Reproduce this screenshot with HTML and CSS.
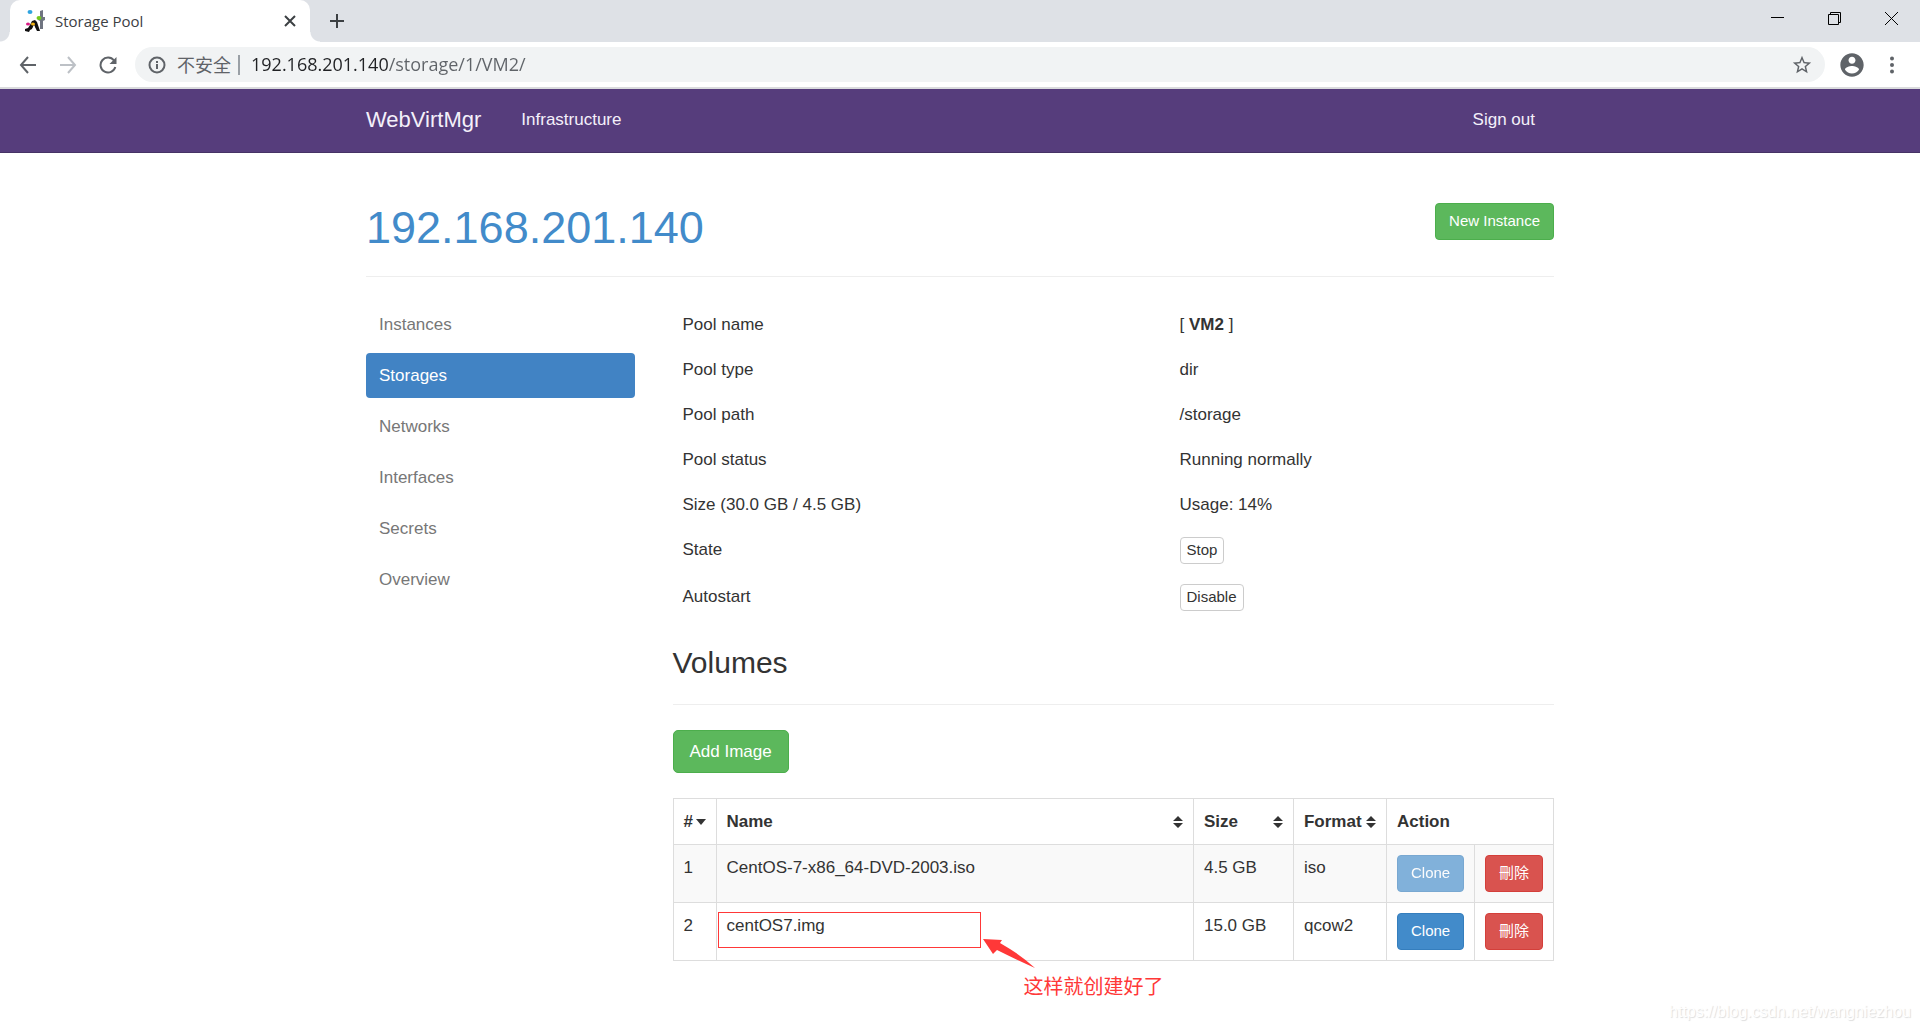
FILE: index.html
```html
<!DOCTYPE html>
<html lang="en">
<head>
<meta charset="utf-8">
<meta name="viewport" content="width=device-width, initial-scale=1">
<title>Storage Pool</title>
<link rel="stylesheet" href="styles.css">
</head>
<body>
<header class="browser">
  <div class="tabstrip">
    <div class="tab">
      <svg class="favicon" viewBox="0 0 20 22" aria-hidden="true">
        <path d="M15 1l3-1v7h2v3l-2 1v8h-3v-8l-2-1V8l2 1z" fill="#6f7480"/>
        <path d="M7 11l3-1 2 2 3 9h-3l-3-6-2 4-2 1-1 2-4-1v-2l3-1 2-3z" fill="#111"/>
        <path d="M9 15l1 4-3 1z" fill="#fff"/>
        <ellipse cx="5" cy="2" rx="2.500" ry="2" fill="#2fa4e0"/>
        <ellipse cx="14" cy="8" rx="2.500" ry="2" fill="#76c81e"/>
        <ellipse cx="3" cy="14" rx="2" ry="1.500" fill="#d81b84"/>
        <ellipse cx="8" cy="14" rx="2" ry="1.500" fill="#f2b414"/>
      </svg>
      <span class="tab-title">Storage Pool</span>
      <button class="tab-close" aria-label="Close tab"><svg width="12" height="12" viewBox="0 0 12 12"><path d="M1 1l10 10M11 1L1 11" stroke="#3c4043" stroke-width="2"/></svg></button>
    </div>
    <button class="tab-new" aria-label="New tab"><svg width="16" height="16" viewBox="0 0 16 16"><path d="M8 1v14M1 8h14" stroke="#3c4043" stroke-width="2"/></svg></button>
    <div class="window-controls">
      <button aria-label="Minimize"><svg width="13" height="13" viewBox="0 0 13 13"><path d="M0 5.500h13" stroke="#000"/></svg></button>
      <button aria-label="Restore"><svg width="13" height="13" viewBox="0 0 13 13"><path d="M.5 2.500h10v10H.5zM2.500 2.500v-2h10v10h-2" fill="none" stroke="#000"/></svg></button>
      <button aria-label="Close"><svg width="13" height="13" viewBox="0 0 13 13"><path d="M0 0l13 13M13 0L0 13" stroke="#000"/></svg></button>
    </div>
  </div>
  <div class="toolbar">
    <button class="tool" aria-label="Back"><svg width="18" height="18" viewBox="0 0 18 18"><path d="M17 9H2M9 1L2 9l7 8" fill="none" stroke="#5f6368" stroke-width="2"/></svg></button>
    <button class="tool" aria-label="Forward"><svg width="18" height="18" viewBox="0 0 18 18"><path d="M1 9h15M9 1l7 8-7 8" fill="none" stroke="#bdc1c6" stroke-width="2"/></svg></button>
    <button class="tool" aria-label="Reload"><svg width="18" height="18" viewBox="0 0 18 18"><path d="M15 4.500A7.500 7.500 0 1 0 16.300 11" fill="none" stroke="#5f6368" stroke-width="2"/><path d="M17.500 1v7h-7z" fill="#5f6368"/></svg></button>
    <div class="omnibox">
      <svg width="18" height="18" viewBox="0 0 18 18" aria-hidden="true"><circle cx="9" cy="9" r="7.500" fill="none" stroke="#5f6368" stroke-width="2"/><path d="M9 8v5M9 5v2" stroke="#5f6368" stroke-width="2"/></svg>
      <label class="security" for="address">不安全</label>
      <input id="address" class="address" type="text" value="192.168.201.140/storage/1/VM2/">
      <button class="star" aria-label="Bookmark"><svg width="22" height="22" viewBox="0 0 24 24"><path fill="#5f6368" d="M22 9.240l-7.190-.62L12 2 9.190 8.630 2 9.240l5.460 4.730L5.820 21 12 17.270 18.180 21l-1.630-7.030L22 9.240zM12 15.400l-3.760 2.270 1-4.280-3.320-2.880 4.380-.38L12 6.100l1.710 4.040 4.380.38-3.320 2.880 1 4.280L12 15.400z"/></svg></button>
    </div>
    <button class="tool" aria-label="Profile"><svg width="28" height="28" viewBox="0 0 24 24"><path fill="#5f6368" d="M12 2C6.480 2 2 6.480 2 12s4.480 10 10 10 10-4.480 10-10S17.520 2 12 2zm0 3c1.660 0 3 1.340 3 3s-1.340 3-3 3-3-1.340-3-3 1.340-3 3-3zm0 14.200c-2.500 0-4.710-1.280-6-3.220.03-1.990 4-3.080 6-3.080 1.990 0 5.970 1.090 6 3.080-1.290 1.940-3.500 3.220-6 3.220z"/></svg></button>
    <button class="tool" aria-label="Menu"><svg width="6" height="18" viewBox="0 0 6 18"><g fill="#5f6368"><circle cx="3" cy="2.500" r="2"/><circle cx="3" cy="9" r="2"/><circle cx="3" cy="15.500" r="2"/></g></svg></button>
  </div>
</header>

<nav class="navbar">
  <div class="container navbar-inner">
    <a class="brand" href="#">WebVirtMgr</a>
    <a class="navbar-link" href="#">Infrastructure</a>
    <a class="navbar-link navbar-end" href="#">Sign out</a>
  </div>
</nav>

<main class="container">
  <div class="page-header">
    <h1><a href="#">192.168.201.140</a></h1>
    <button class="btn btn-sm btn-success">New Instance</button>
  </div>
  <div class="layout">
    <nav class="sidebar" aria-label="Host">
      <a href="#">Instances</a>
      <a class="active" href="#">Storages</a>
      <a href="#">Networks</a>
      <a href="#">Interfaces</a>
      <a href="#">Secrets</a>
      <a href="#">Overview</a>
    </nav>
    <div class="content">
      <table class="info">
        <tbody>
          <tr><td>Pool name</td><td>[ <strong>VM2</strong> ]</td></tr>
          <tr><td>Pool type</td><td>dir</td></tr>
          <tr><td>Pool path</td><td>/storage</td></tr>
          <tr><td>Pool status</td><td>Running normally</td></tr>
          <tr><td>Size (30.0 GB / 4.5 GB)</td><td>Usage: 14%</td></tr>
          <tr><td>State</td><td><button class="btn btn-xs btn-default">Stop</button></td></tr>
          <tr><td>Autostart</td><td><button class="btn btn-xs btn-default">Disable</button></td></tr>
        </tbody>
      </table>
      <h2>Volumes</h2>
      <button class="btn btn-success">Add Image</button>
      <div class="volumes-wrap">
        <table class="volumes">
          <colgroup><col class="c-num"><col><col class="c-size"><col class="c-format"><col class="c-clone"><col class="c-delete"></colgroup>
          <thead>
            <tr>
              <th><button class="sort">#<svg width="10" height="6" viewBox="0 0 10 6"><path d="M0 0h10L5 6z" fill="#333"/></svg></button></th>
              <th><button class="sort">Name<svg width="10" height="12" viewBox="0 0 10 12"><path d="M0 5h10L5 0zM0 7h10l-5 5z" fill="#333"/></svg></button></th>
              <th><button class="sort">Size<svg width="10" height="12" viewBox="0 0 10 12"><path d="M0 5h10L5 0zM0 7h10l-5 5z" fill="#333"/></svg></button></th>
              <th><button class="sort">Format<svg width="10" height="12" viewBox="0 0 10 12"><path d="M0 5h10L5 0zM0 7h10l-5 5z" fill="#333"/></svg></button></th>
              <th colspan="2">Action</th>
            </tr>
          </thead>
          <tbody>
            <tr>
              <td>1</td><td>CentOS-7-x86_64-DVD-2003.iso</td><td>4.5 GB</td><td>iso</td>
              <td><button class="btn btn-sm btn-primary" disabled>Clone</button></td>
              <td><button class="btn btn-sm btn-danger">刪除</button></td>
            </tr>
            <tr>
              <td>2</td><td>centOS7.img</td><td>15.0 GB</td><td>qcow2</td>
              <td><button class="btn btn-sm btn-primary">Clone</button></td>
              <td><button class="btn btn-sm btn-danger">刪除</button></td>
            </tr>
          </tbody>
        </table>
        <div class="mark-box"></div>
        <svg class="mark-arrow" width="54" height="30" viewBox="0 0 54 30" aria-hidden="true"><path d="M0 0l19 1-2 3q21 12 35 25Q32 20 14 11l-4 4z" fill="#ff3838"/></svg>
        <p class="mark-note">这样就创建好了</p>
      </div>
    </div>
  </div>
</main>
<div class="watermark">https://blog.csdn.net/wangniezhou</div>
</body>
</html>
```
FILE: styles.css
```css
* { box-sizing: border-box; }

body {
  margin: 0;
  position: relative;
  min-height: 100vh;
  background: #fff;
  color: #333;
  font: 17px/25px "Liberation Sans", Arial, "Noto Sans CJK TC", sans-serif;
}

button { font: inherit; color: inherit; cursor: pointer; }
a { color: inherit; text-decoration: none; }
svg { display: block; flex: none; }

/* Browser frame */
.browser { border-bottom: 2px solid #dadbdd; font-family: "Open Sans", "Noto Sans CJK SC", sans-serif; }
.browser button {
  display: flex;
  align-items: center;
  justify-content: center;
  padding: 0;
  border: 0;
  background: none;
}
.tabstrip { display: flex; height: 42px; padding-left: 10px; background: #dee1e6; }
.tab {
  position: relative;
  display: flex;
  align-items: center;
  width: 300px;
  padding: 0 14px 0 15px;
  border-radius: 10px 10px 0 0;
  background: #fff;
}
/* Flared feet of the active tab */
.tab::before,
.tab::after {
  content: "";
  position: absolute;
  bottom: 0;
  width: 10px;
  height: 10px;
}
.tab::before { right: 100%; background: radial-gradient(circle at 0 0, #dee1e6 9px, #fff 10px); }
.tab::after { left: 100%; background: radial-gradient(circle at 100% 0, #dee1e6 9px, #fff 10px); }
.favicon { width: 20px; height: 22px; }
.tab-title { flex: 1; margin-left: 10px; font-size: 15px; color: #3c4043; }
.browser .tab-close { width: 12px; }
.browser .tab-new { width: 54px; }
.window-controls { display: flex; margin-left: auto; padding-bottom: 6px; }
.window-controls button { width: 57px; }

.toolbar { display: flex; align-items: center; height: 45px; padding: 0 8px; }
.browser .tool { width: 40px; height: 40px; }
.omnibox {
  display: flex;
  flex: 1;
  align-items: center;
  height: 35px;
  margin: 0 7px;
  padding: 0 12px 0 13px;
  border-radius: 18px;
  background: #f1f3f4;
}
.security {
  margin-left: 11px;
  padding-right: 7px;
  border-right: 2px solid #9aa0a6;
  font-size: 18px;
  line-height: 20px;
  color: #5f6368;
}
.address {
  flex: 1;
  min-width: 0;
  margin-left: 11px;
  padding: 0 0 2px;
  border: 0;
  outline: 0;
  font: 18px/24px "Open Sans", sans-serif;
  color: #202124;
  background: linear-gradient(to right, #202124 137px, #5f6368 137px);
  background-clip: text;
  -webkit-background-clip: text;
  -webkit-text-fill-color: transparent;
}

/* Application bar */
.container { width: 100%; max-width: 1188px; margin: 0 auto; }
.navbar { background: #563d7c; border-bottom: 1px solid #463265; color: #f4f0fa; }
.navbar-inner { display: flex; align-items: center; height: 63px; padding-bottom: 2px; }
.brand { font-size: 22px; }
.navbar-link { margin-left: 40px; }
.navbar-end { margin-left: auto; padding-right: 19px; }

/* Page header */
.page-header {
  display: flex;
  align-items: flex-start;
  justify-content: space-between;
  margin: 50px 0 25px;
  padding-bottom: 24px;
  border-bottom: 1px solid #eee;
}
h1, h2 { margin: 0; font-weight: 400; }
h1 { font-size: 45px; line-height: 49px; color: #428bca; }

.layout { display: grid; grid-template-columns: repeat(12, 1fr); column-gap: 38px; }
.sidebar { grid-column: span 3; display: flex; flex-direction: column; gap: 6px; }
.sidebar a { padding: 10px 13px; border-radius: 4px; color: #777; }
.sidebar .active { background: #4183c4; color: #fff; }
.content { grid-column: span 9; }

/* Buttons */
.btn { display: inline-block; vertical-align: top; padding: 8px 16px; border: 1px solid; border-radius: 5px; color: #fff; white-space: nowrap; }
.btn-sm { padding: 5px 13px 7px; border-radius: 4px; font-size: 15px; line-height: 23px; }
.btn-xs { padding: 0 6px 2px; border-radius: 4px; font-size: 15px; line-height: 23px; }
.btn-success { background: #5cb85c; border-color: #4cae4c; }
.btn-primary { background: #428bca; border-color: #357ebd; }
.btn-danger { background: #d9534f; border-color: #d43f3a; }
.btn-default { background: #fff; border-color: #ccc; color: #333; }
.btn:disabled { opacity: 0.65; }

/* Tables */
table { width: 100%; border-collapse: collapse; table-layout: fixed; }
td, th { padding: 10px; text-align: left; vertical-align: top; }
.info td:first-child { width: 497px; }
h2 {
  margin: 25px 0;
  padding-bottom: 25px;
  border-bottom: 1px solid #eee;
  font-size: 30px;
  line-height: 33px;
}
.volumes-wrap { position: relative; margin-top: 25px; }
.volumes td, .volumes th { border: 1px solid #ddd; }
.volumes tbody tr:nth-child(odd) { background: #f9f9f9; }
.c-num { width: 43px; }
.c-size { width: 100px; }
.c-format { width: 93px; }
.c-clone { width: 88px; }
.c-delete { width: 79px; }
.sort {
  display: flex;
  align-items: center;
  justify-content: space-between;
  width: 100%;
  padding: 0;
  border: 0;
  background: none;
  font-weight: 700;
}

/* Annotations over the volume list */
.mark-box { position: absolute; left: 45px; top: 114px; width: 263px; height: 36px; border: 1px solid #ff3838; }
.mark-arrow { position: absolute; left: 310px; top: 141px; }
.mark-note {
  position: absolute;
  left: 351px;
  top: 175px;
  margin: 0;
  font-family: "Noto Sans CJK SC", sans-serif;
  font-size: 20px;
  color: #ff3838;
  white-space: nowrap;
}
.watermark {
  position: absolute;
  right: 9px;
  bottom: 6px;
  font-size: 16px;
  color: #fff;
  text-shadow: 1px 1px 1px #ddd;
}
```
